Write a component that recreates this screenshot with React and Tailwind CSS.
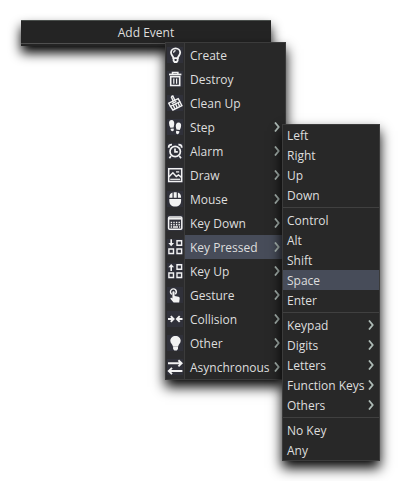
import React from "react";

const line = { fill: "none", stroke: "currentColor", strokeWidth: 1.5 };

const ICONS = {
  create: (
    <g {...line} strokeWidth="1.8">
      <path d="M6.4 11.2C6.4 9.2 4 8.400 4 5.600a4.600 4.300 0 0 1 9.200 0C13.200 8.400 10.800 9.200 10.800 11.200Z" />
      <path d="M6.600 11v2.600l1 1.400h2l1-1.400V11" />
      <path d="M6.600 5.800c0-1.300.7-2.100 2-2.200" strokeWidth="1.2" />
    </g>
  ),
  destroy: (
    <g {...line}>
      <path d="M2 3.500h12.400" strokeWidth="1.800" />
      <path d="M5.500 3V1.500h5.400V3" />
      <path d="M3.700 5.700h9v8.800h-9z" strokeWidth="1.600" />
      <path d="M6.800 7.500v5.200M9.600 7.500v5.200" strokeWidth="1.200" />
    </g>
  ),
  cleanUp: (
    <g {...line} strokeWidth="1.400">
      <path d="M4.200 1.600l1.600-.6 2.300 4.700" />
      <path d="M4.200 1.600l2.200 4.900" />
      <path d="M1.800 8.200l9.400-4.600 1.700 3.200-9.500 4.600z" />
      <path d="M3.400 11.200l2.500 3.800 9-4.400-2-3.800" />
      <path d="M6.200 10l1.600 3.800M8.600 8.900l1.600 3.800M11 7.700l1.600 3.800M4.800 8.600l4.600-2.200" />
    </g>
  ),
  step: (
    <g fill="currentColor">
      <path d="M4.600 1C6.600 1 7.400 3 7.200 5.200L6.600 8.400 3.400 8.800C2.600 7.200 2 5.600 2 4 2 2.200 3 1 4.600 1Z" />
      <path d="M3.600 9.800l3-.4c.6 1.600 0 2.800-1.200 2.800S3.600 11 3.600 9.800Z" />
      <path d="M11.600 3.400c1.800 0 2.600 1.400 2.500 3 0 1.700-.7 3.200-1.400 4.700L9.400 10.600 8.800 7.400c-.2-2.200.8-4 2.800-4Z" />
      <path d="M9.200 11.800l3.200.5c0 1.700-.7 2.900-2 2.900s-1.700-1.600-1.200-3.400Z" />
    </g>
  ),
  alarm: (
    <g {...line} strokeWidth="1.700">
      <circle cx="8.200" cy="8.500" r="5.200" />
      <path d="M8 5.500v3.300h2.800M4 13l-1.600 2.200M12.400 13l1.600 2.200" />
      <path d="M1.700 4.700C1.600 2.500 2.800 1.500 5 1.600M14.700 4.700c.1-2.200-1.100-3.200-3.300-3.100" strokeWidth="1.800" />
    </g>
  ),
  draw: (
    <g {...line} strokeWidth="1.500">
      <path d="M1.700 1.700h13v12.800h-13z" />
      <path d="M2 9.800L5.900 5.800l3.400 3.600 2.200-1.500 3 2.400" strokeWidth="1.500" />
      <path d="M3.200 12.300h10" strokeWidth="1.200" />
      <path d="M9 4.900h3.200" strokeWidth="1.300" />
    </g>
  ),
  mouse: (
    <g fill="currentColor">
      <path d="M5.500 1.500v5.200H2.300C2.300 4 3.300 2.200 5.500 1.500ZM6.700 1.200h3v5.500h-3zM10.900 1.500c2.200.7 3.200 2.500 3.200 5.200h-3.200z" />
      <path d="M2.300 7.900h11.800v1.800c0 3.600-2.200 5.800-5.900 5.800s-5.900-2.200-5.900-5.800z" />
    </g>
  ),
  keyDown: (
    <g {...line}>
      <rect x="1.600" y="2" width="13.200" height="12.200" rx="1" />
      <path d="M2 3.700h12.400" strokeWidth="1.800" />
      <path d="M3.700 7.500h9.500M3.700 9.700h9.500" strokeDasharray="1.400 1.200" strokeWidth="1.400" />
      <path d="M3.700 12h1.400M6 12h5M12 12h1.200" strokeWidth="1.300" />
    </g>
  ),
  keyPressed: (
    <g {...line} strokeWidth="1.400">
      <path d="M10 1.800h4.600v4.500H10zM1.900 10h4.600v4.500H1.900zM10 10h4.600v4.500H10z" />
      <path d="M4.200.3v5" strokeWidth="1.600" />
      <path d="M1.300 3.900h5.800L4.200 7.200z" fill="currentColor" stroke="none" />
    </g>
  ),
  keyUp: (
    <g {...line} strokeWidth="1.400">
      <path d="M10 1.800h4.600v4.500H10zM1.900 10h4.600v4.500H1.900zM10 10h4.600v4.500H10z" />
      <path d="M4.200 3v5" strokeWidth="1.600" />
      <path d="M1.300 4.200h5.800L4.200.9z" fill="currentColor" stroke="none" />
    </g>
  ),
  gesture: (
    <g>
      <path
        d="M4.800 7.400C3.200 6.200 3 4.200 4.200 2.900s3.200-1.400 4.300-.1 1 3.200-.2 4.500"
        {...line}
        strokeWidth="1.400"
      />
      <path
        d="M5.400 5.200c0-1.400 2.200-1.400 2.200 0v3.800l3.900.8c1 .2 1.300.9 1.200 1.700l-.5 4H6.600L3.600 12c-.5-1 .6-1.600 1.300-1l.5.4z"
        fill="currentColor"
      />
    </g>
  ),
  collision: (
    <g {...line} strokeWidth="1.900">
      <path d="M1 8h4.500M11 8h4.500" />
      <path d="M3.800 5.100L6.600 8l-2.800 2.900M12.700 5.100L9.900 8l2.800 2.900" />
    </g>
  ),
  other: (
    <g fill="currentColor">
      <path d="M8.500.9c3 0 5.200 2.100 5.200 4.800 0 2.600-2.300 3.600-2.500 5.900H5.900C5.700 9.300 3.300 8.300 3.300 5.700 3.300 3 5.500.9 8.500.9Z" />
      <path d="M6.100 11.500h4.900v2.400l-1.300 1.600H7.400l-1.300-1.600z" />
    </g>
  ),
  async: (
    <g {...line} strokeWidth="1.900">
      <path d="M1 4.300h13.400M11.400 1.200l3.200 3.100-3.200 3.100M15.400 12H2M5 8.900L1.800 12 5 15.100" />
    </g>
  ),
};

const EVENTS = [
  { label: "Create", icon: "create" },
  { label: "Destroy", icon: "destroy" },
  { label: "Clean Up", icon: "cleanUp" },
  { label: "Step", icon: "step", more: true },
  { label: "Alarm", icon: "alarm", more: true },
  { label: "Draw", icon: "draw", more: true },
  { label: "Mouse", icon: "mouse", more: true },
  { label: "Key Down", icon: "keyDown", more: true },
  { label: "Key Pressed", icon: "keyPressed", more: true, active: true },
  { label: "Key Up", icon: "keyUp", more: true },
  { label: "Gesture", icon: "gesture", more: true },
  { label: "Collision", icon: "collision", more: true },
  { label: "Other", icon: "other", more: true },
  { label: "Asynchronous", icon: "async", more: true },
];

const KEY_GROUPS = [
  [{ label: "Left" }, { label: "Right" }, { label: "Up" }, { label: "Down" }],
  [
    { label: "Control" },
    { label: "Alt" },
    { label: "Shift" },
    { label: "Space", active: true },
    { label: "Enter" },
  ],
  [
    { label: "Keypad", more: true },
    { label: "Digits", more: true },
    { label: "Letters", more: true },
    { label: "Function Keys", more: true },
    { label: "Others", more: true },
  ],
  [{ label: "No Key" }, { label: "Any" }],
];

function Chevron() {
  return (
    <svg
      className="h-[10px] w-[6px] shrink-0 text-[#aebbb6]"
      viewBox="0 0 6 10"
      fill="none"
      stroke="currentColor"
      strokeWidth="1.8"
      aria-hidden="true"
    >
      <path d="M1 .5L4.700 5 1 9.500" />
    </svg>
  );
}

function EventItem({ item }) {
  return (
    <li role="none">
      <button
        type="button"
        role="menuitem"
        aria-haspopup={item.more ? "menu" : undefined}
        aria-expanded={item.more ? Boolean(item.active) : undefined}
        className="flex h-6 w-full items-stretch text-left"
      >
        <span className="flex w-[19px] shrink-0 items-center border-r border-[#3b3b3b] bg-[#2c2c2e] pl-px">
          <svg className="h-4 w-4 bg-[#30313a] text-[#f2f2f2]" viewBox="0 0 16 16" aria-hidden="true">
            {ICONS[item.icon]}
          </svg>
        </span>
        <span
          className={
            item.active
              ? "flex flex-1 items-center justify-between bg-[#474c59] pl-[5px] pr-[5px]"
              : "flex flex-1 items-center justify-between pl-[5px] pr-[5px]"
          }
        >
          <span className="pt-[2px]">{item.label}</span>
          {item.more && <Chevron />}
        </span>
      </button>
    </li>
  );
}

function KeyItem({ item }) {
  return (
    <button
      type="button"
      role="menuitem"
      aria-haspopup={item.more ? "menu" : undefined}
      className={
        item.active
          ? "flex h-5 w-full items-center justify-between bg-[#474c59] pl-1 pr-[5px] text-left"
          : "flex h-5 w-full items-center justify-between pl-1 pr-[5px] text-left"
      }
    >
      <span className="pt-[2px]">{item.label}</span>
      {item.more && <Chevron />}
    </button>
  );
}

export default function App() {
  return (
    <main className="min-h-screen bg-white px-[21px] py-5 font-['Open_Sans',sans-serif] text-[12px] leading-4 text-[#dedede]">
      <div className="relative w-[250px]">
        <div className="border-t border-[#4a4f4c] bg-[#242424] pb-[2px] shadow-[0_7px_12px_0_rgba(0,0,0,1)]">
          <button
            type="button"
            aria-haspopup="menu"
            aria-expanded="true"
            className="h-[23px] w-full border-b border-[#505050] pt-[2px] text-center"
          >
            Add Event
          </button>
        </div>

        <div className="absolute left-36 top-[22px] w-[121px] border border-[#3b3b3b] bg-[#282828] shadow-[0_7px_12px_0_rgba(0,0,0,1)]">
          <ul role="menu" aria-label="Add Event">
            {EVENTS.map((item) => (
              <EventItem key={item.label} item={item} />
            ))}
          </ul>

          <div
            role="menu"
            aria-label="Key Pressed"
            className="absolute left-[116px] top-[81px] w-[98px] border border-[#3b3b3b] bg-[#282828] shadow-[0_7px_12px_0_rgba(0,0,0,1)]"
          >
            {KEY_GROUPS.map((group, index) => (
              <React.Fragment key={group[0].label}>
                {index > 0 && <hr className="my-[2px] border-t border-[#404040]" />}
                {group.map((item) => (
                  <KeyItem key={item.label} item={item} />
                ))}
              </React.Fragment>
            ))}
          </div>
        </div>
      </div>
    </main>
  );
}
